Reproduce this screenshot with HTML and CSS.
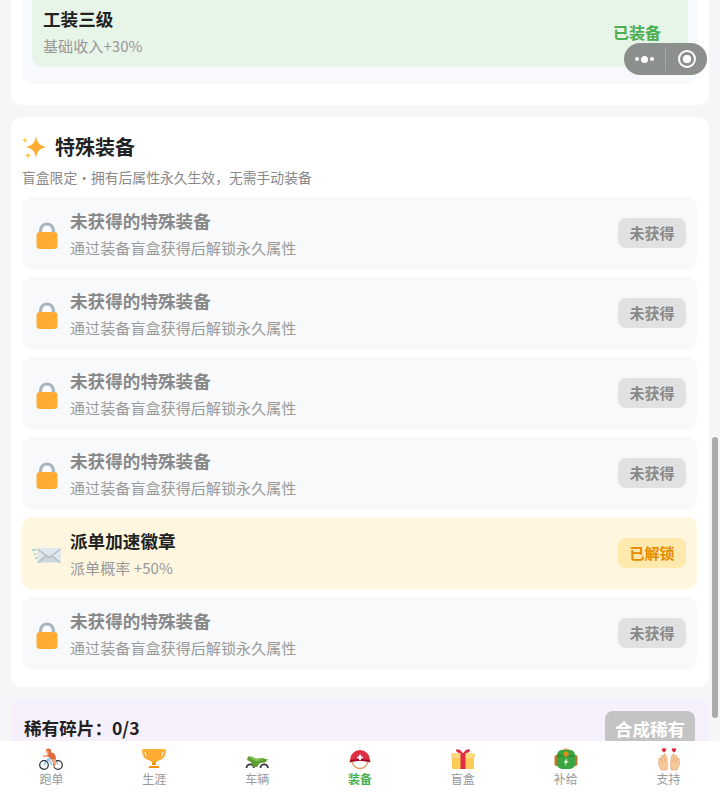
FILE: index.html
```html
<!DOCTYPE html>
<html lang="zh-CN">
<head>
  <meta charset="UTF-8">
  <meta name="viewport" content="width=device-width, initial-scale=1.0">
  <title>装备</title>
  <link rel="stylesheet" href="styles.css">
</head>
<body>

  <div class="page">
    <div class="scroll">

      <div class="card card-top">
        <div class="panel">
          <div class="outfit">
            <div>
              <p class="item-title">工装三级</p>
              <p class="item-sub">基础收入+30%</p>
            </div>
            <span class="outfit-state">已装备</span>
          </div>
        </div>
      </div>

      <div class="card card-special">
        <div class="section-head">
          <svg class="section-icon" viewBox="0 0 25 26">
            <path fill="#ffac33" d="M14 2c1 6.400 3.400 9.200 10 11-6.600 1.800-9 4.600-10 11.500C13 17.600 10.600 14.800 4 13c6.600-1.800 9-4.600 10-11z"/>
            <path fill="#ffcc4d" d="M3 3c.4 2.100 1 2.800 3 3.300C4 6.800 3.400 7.500 3 9.600 2.600 7.500 2 6.800 0 6.300 2 5.800 2.600 5.100 3 3z"/>
            <path fill="#ffcc4d" d="M6 18c.4 2.200 1.100 3 3.300 3.500C7.100 22 6.400 22.800 6 25c-.4-2.200-1.100-3-3.300-3.500C4.900 21 5.600 20.200 6 18z"/>
          </svg>
          <h2 class="section-title">特殊装备</h2>
        </div>
        <p class="section-sub">盲盒限定・拥有后属性永久生效，无需手动装备</p>

        <div class="item-list">
          <div class="item">
            <svg class="lock" viewBox="0 0 24 30"><path fill="none" stroke="#a9b6bf" stroke-width="3.200" d="M5.500 14v-3.500a6.500 6.500 0 0 1 13 0V14"/><rect x="1.500" y="12" width="21" height="17" rx="3.500" fill="#ffac33"/></svg>
            <div class="item-text">
              <p class="item-title muted">未获得的特殊装备</p>
              <p class="item-sub">通过装备盲盒获得后解锁永久属性</p>
            </div>
            <span class="badge">未获得</span>
          </div>
          <div class="item">
            <svg class="lock" viewBox="0 0 24 30"><path fill="none" stroke="#a9b6bf" stroke-width="3.200" d="M5.500 14v-3.500a6.500 6.500 0 0 1 13 0V14"/><rect x="1.500" y="12" width="21" height="17" rx="3.500" fill="#ffac33"/></svg>
            <div class="item-text">
              <p class="item-title muted">未获得的特殊装备</p>
              <p class="item-sub">通过装备盲盒获得后解锁永久属性</p>
            </div>
            <span class="badge">未获得</span>
          </div>
          <div class="item">
            <svg class="lock" viewBox="0 0 24 30"><path fill="none" stroke="#a9b6bf" stroke-width="3.200" d="M5.500 14v-3.500a6.500 6.500 0 0 1 13 0V14"/><rect x="1.500" y="12" width="21" height="17" rx="3.500" fill="#ffac33"/></svg>
            <div class="item-text">
              <p class="item-title muted">未获得的特殊装备</p>
              <p class="item-sub">通过装备盲盒获得后解锁永久属性</p>
            </div>
            <span class="badge">未获得</span>
          </div>
          <div class="item">
            <svg class="lock" viewBox="0 0 24 30"><path fill="none" stroke="#a9b6bf" stroke-width="3.200" d="M5.500 14v-3.500a6.500 6.500 0 0 1 13 0V14"/><rect x="1.500" y="12" width="21" height="17" rx="3.500" fill="#ffac33"/></svg>
            <div class="item-text">
              <p class="item-title muted">未获得的特殊装备</p>
              <p class="item-sub">通过装备盲盒获得后解锁永久属性</p>
            </div>
            <span class="badge">未获得</span>
          </div>
          <div class="item item-unlocked">
            <svg class="mail" viewBox="0 0 30 20">
              <path fill="#e1e8ed" d="M7 3h20a2 2 0 0 1 2 2v11a2 2 0 0 1-2 2H7a2 2 0 0 1-2-2V5a2 2 0 0 1 2-2z"/>
              <path fill="#ccd6dd" d="M5.500 17l9-8 2.500 2 2.500-2 9 8z"/>
              <path fill="#aab8c2" d="M5.500 17.500l8.500-8 .8.700-8.500 8zM28.500 17.500l-8.500-8-.8.700 8.500 8zM5.500 3.500L17 12l11.500-8.500.5 1L17 13.500 5 4.500z"/>
              <path fill="none" stroke="#8ccfd8" stroke-width="1.300" d="M0 5h4M2 9h2M3 13h2"/>
            </svg>
            <div class="item-text">
              <p class="item-title">派单加速徽章</p>
              <p class="item-sub">派单概率 +50%</p>
            </div>
            <span class="badge badge-unlocked">已解锁</span>
          </div>
          <div class="item">
            <svg class="lock" viewBox="0 0 24 30"><path fill="none" stroke="#a9b6bf" stroke-width="3.200" d="M5.500 14v-3.500a6.500 6.500 0 0 1 13 0V14"/><rect x="1.500" y="12" width="21" height="17" rx="3.500" fill="#ffac33"/></svg>
            <div class="item-text">
              <p class="item-title muted">未获得的特殊装备</p>
              <p class="item-sub">通过装备盲盒获得后解锁永久属性</p>
            </div>
            <span class="badge">未获得</span>
          </div>
        </div>
      </div>

      <div class="card card-shards">
        <span class="shards-label">稀有碎片：0/3</span>
        <button class="merge-btn">合成稀有</button>
      </div>

    </div>

    <div class="tabbar">
      <div class="tab">
        <svg class="tab-icon" viewBox="0 0 24 23">
          <path fill="none" stroke="#88c9f9" stroke-width="1.400" d="M5 17l4-6h7l3 6M9 11l4 6"/>
          <circle cx="5" cy="17" r="4.300" fill="none" stroke="#292f33" stroke-width="1.200"/>
          <circle cx="19" cy="17" r="4.300" fill="none" stroke="#292f33" stroke-width="1.200"/>
          <path fill="#dd6b3d" d="M8 8c0-2 2.500-3.500 4.500-3.500 2.500 0 4.500 3 4.500 6l-1 1.500h-3l-2-2z"/>
          <path fill="#f4a77a" d="M13 11l3.500.5 1 3-2 5h-1.500l1-4.500-3-1.500zM3.500 7.500L8 7l1 1.500-4.500 1z"/>
          <circle cx="9.500" cy="3" r="2.600" fill="#e85e2f"/>
          <circle cx="8.500" cy="3.800" r="1.400" fill="#f7b98f"/>
        </svg>
        <span>跑单</span>
      </div>
      <div class="tab">
        <svg class="tab-icon" viewBox="0 0 24 23">
          <path fill="none" stroke="#ffac33" stroke-width="2.400" d="M4 2.500H1.300c0 5 2.200 8 6.200 8.500M20 2.500h2.700c0 5-2.200 8-6.200 8.500"/>
          <path fill="#ffac33" d="M3.500 1h17c0 8-3.500 12-6.500 13v3h-4v-3C7 13 3.500 9 3.500 1z"/>
          <path fill="#f4900c" d="M10 14.500h4V17h-4zM7.500 18h9l1 2h-11z"/>
        </svg>
        <span>生涯</span>
      </div>
      <div class="tab">
        <svg class="tab-icon" viewBox="0 0 24 23">
          <path fill="none" stroke="#31373d" stroke-width="1.800" d="M1.500 20a3.700 3.700 0 0 1 7.400 0M15.500 20a3.700 3.700 0 0 1 7.400 0"/>
          <path fill="#5c9e31" d="M3 8.500l5 1.500 3 1.500 6-1.500 6 1.500-3 3-5 .5-3 4H8l-2-5-4-2z"/>
          <path fill="#7cc04b" d="M6 8l5 2.500 5-.5 1 2-6 1.500-4.500-2.500zM3 8l3 .5-1 1.500z"/>
        </svg>
        <span>车辆</span>
      </div>
      <div class="tab tab-active">
        <svg class="tab-icon" viewBox="0 0 24 23">
          <path fill="none" stroke="#d9a066" stroke-width="1.400" d="M4 13c1 5 4 7.500 8 7.500s7-2.500 8-7.500"/>
          <path fill="#dd2e44" d="M2 12a10 10 0 0 1 20 0v1c-6-2-14-2-20 0z"/>
          <path fill="#a0041e" d="M2 12.500c6-2 14-2 20 0l.5 2c-6-2-15-2-21 0z"/>
          <path fill="#fff" d="M11 6.800h2v1.700h1.700v2H13v1.700h-2v-1.700H9.300v-2H11z"/>
        </svg>
        <span>装备</span>
      </div>
      <div class="tab">
        <svg class="tab-icon" viewBox="0 0 24 23">
          <rect x="1" y="6" width="22" height="15" rx="1.500" fill="#fdcb58"/>
          <rect x="0" y="5" width="24" height="5" rx="1.500" fill="#ffd983"/>
          <rect x="9.500" y="5" width="5" height="16" fill="#dd2e44"/>
          <path fill="#dd2e44" d="M12 5.500C10 2 7 .5 5.500 1.500 4 2.500 6 5.500 12 5.500zM12 5.500c2-3.500 5-5 6.500-4 1.500 1-.5 4-6.500 4z"/>
        </svg>
        <span>盲盒</span>
      </div>
      <div class="tab">
        <svg class="tab-icon" viewBox="0 0 24 23">
          <path fill="none" stroke="#d99e5b" stroke-width="1.600" d="M8 5c0-5 8-5 8 0"/>
          <rect x="0.500" y="7" width="4.500" height="11" rx="2" fill="#b57a2c"/>
          <rect x="19" y="7" width="4.500" height="11" rx="2" fill="#b57a2c"/>
          <rect x="3" y="2" width="18" height="19" rx="5" fill="#3ba63f"/>
          <path fill="#2d8a33" d="M3 7h18v1.500H3z"/>
          <circle cx="12" cy="6" r="2.600" fill="#e08a1e"/>
          <path fill="#e8f7d8" d="M13 10l-3.500 4.500h2L10.800 18l3.700-5h-2z"/>
        </svg>
        <span>补给</span>
      </div>
      <div class="tab">
        <svg class="tab-icon" viewBox="0 0 24 23">
          <path fill="#f7c89b" stroke="#dfa06e" stroke-width=".6" d="M1.500 16l.5-6 2 .5.500-3 2 .5.800-2.500L9 7l1 4.500.5 5-.5 5.500H4z"/>
          <path fill="#f7c89b" stroke="#dfa06e" stroke-width=".6" d="M22.500 16l-.5-6-2 .5-.5-3-2 .5-.8-2.500L15 7l-1 4.500-.5 5 .5 5.500h6z"/>
          <path fill="none" stroke="#dfa06e" stroke-width=".6" d="M4 10.500l2 5M6.500 8l2 6M20 10.500l-2 5M17.500 8l-2 6"/>
          <path fill="#dd2e44" d="M7 .5c.9-.7 2.200-.2 2.200.9 0 1.300-1.300 2.300-2.200 3.100-.9-.8-2.200-1.800-2.200-3.100 0-1.100 1.300-1.600 2.200-.9zM17 .5c.9-.7 2.200-.2 2.200.9 0 1.300-1.300 2.300-2.200 3.100-.9-.8-2.200-1.800-2.200-3.100 0-1.100 1.300-1.600 2.200-.9z"/>
        </svg>
        <span>支持</span>
      </div>
    </div>

    <!-- mini program capsule -->
    <div class="capsule">
      <div class="capsule-more"><i></i><b></b><i></i></div>
      <div class="capsule-close"><span></span></div>
    </div>

    <div class="scrollbar"></div>
  </div>

</body>
</html>
```

FILE: styles.css
```css
* {
  box-sizing: border-box;
}

body {
  margin: 0;
  font-family: "Noto Sans CJK SC", "Noto Sans", sans-serif;
  background-color: #f5f6f8;
  color: #222;
}

p, h2 {
  margin: 0;
}

.page {
  position: relative;
  width: 720px;
  height: 794px;
  overflow: hidden;
  display: flex;
  flex-direction: column;
}

.scroll {
  height: 741px;
  overflow: hidden;
  padding: 0 11px;
  flex: none;
}

.card {
  background-color: #fff;
  border-radius: 10px;
}

.card-top {
  height: 105px;
  border-radius: 0 0 10px 10px;
  padding: 0 11px;
}

.panel {
  height: 84px;
  background-color: #f8f9fc;
  border-radius: 0 0 10px 10px;
  padding: 0 10px;
}

.outfit {
  height: 67px;
  background-color: #e7f4e8;
  border-radius: 0 0 10px 10px;
  padding: 6px 27px 0 11px;
  display: flex;
  justify-content: space-between;
  align-items: flex-start;
}

.outfit-state {
  margin-top: 14px;
  font-size: 16px;
  line-height: 24px;
  font-weight: 700;
  color: #4caf50;
}

.card-special {
  height: 570px;
  margin-top: 12px;
  padding: 15px 12px 0 11px;
}

.section-head {
  display: flex;
  align-items: center;
  gap: 8px;
  height: 30px;
}

.section-icon {
  width: 25px;
  height: 26px;
  flex: none;
}

.section-title {
  font-size: 20px;
  line-height: 30px;
  font-weight: 700;
  color: #222;
}

.section-sub {
  margin-top: 5px;
  font-size: 13.800px;
  line-height: 20px;
  color: #888;
}

.item-list {
  margin-top: 10px;
  display: flex;
  flex-direction: column;
  gap: 8px;
}

.item {
  height: 72px;
  background-color: #f8f9fb;
  border-radius: 10px;
  padding: 0 11px 0 13px;
  display: flex;
  align-items: center;
}

.item-unlocked {
  background-color: #fff6df;
}

.lock {
  width: 24px;
  height: 30px;
  margin-top: 4px;
  flex: none;
}

.mail {
  width: 30px;
  height: 20px;
  margin-left: -3px;
  margin-top: 3px;
  margin-right: -3px;
  flex: none;
}

.item-text {
  flex: 1;
  margin-left: 11px;
}

.item-title {
  font-size: 17.600px;
  line-height: 25px;
  font-weight: 700;
  color: #222;
}

.item-title.muted {
  color: #888;
}

.item-sub {
  margin-top: 3px;
  font-size: 15.100px;
  line-height: 22px;
  color: #999;
}

.badge {
  width: 68px;
  height: 30px;
  background-color: #e0e1e3;
  border-radius: 8px;
  text-align: center;
  font-size: 15px;
  line-height: 30px;
  font-weight: 700;
  color: #888;
}

.badge-unlocked {
  background-color: #ffe9ac;
  color: #e68a00;
}

.card-shards {
  height: 60px;
  margin-top: 12px;
  background-color: #f6effc;
  padding: 12px 14px 0 13px;
  display: flex;
  justify-content: space-between;
  align-items: flex-start;
}

.shards-label {
  margin-top: 3px;
  font-size: 17.600px;
  line-height: 28px;
  font-weight: 700;
  color: #222;
}

.merge-btn {
  width: 90px;
  height: 36px;
  border: none;
  border-radius: 8px;
  background-color: #c4c4c4;
  color: #fff;
  font-family: inherit;
  font-size: 17.600px;
  line-height: 36px;
  font-weight: 700;
  padding: 0;
}

.tabbar {
  height: 53px;
  background-color: #fff;
  display: flex;
  padding: 7px 0 0;
}

.tab {
  flex: 1;
  display: flex;
  flex-direction: column;
  align-items: center;
  font-size: 12px;
  line-height: 16px;
  color: #999;
}

.tab-active {
  color: #4caf50;
  font-weight: 700;
}

.tab-icon {
  width: 24px;
  height: 23px;
}

.capsule {
  position: absolute;
  top: 43px;
  left: 624px;
  width: 83px;
  height: 32px;
  border-radius: 16px;
  background-color: #8c908c;
  display: flex;
  align-items: center;
}

.capsule-more {
  width: 42px;
  display: flex;
  justify-content: center;
  align-items: center;
  gap: 2px;
  border-right: 1px solid #a5a8a5;
  height: 24px;
}

.capsule-more i {
  width: 4px;
  height: 4px;
  border-radius: 50%;
  background-color: #fff;
}

.capsule-more b {
  width: 7px;
  height: 7px;
  border-radius: 50%;
  background-color: #fff;
}

.capsule-close {
  flex: 1;
  display: flex;
  justify-content: center;
}

.capsule-close span {
  width: 18px;
  height: 18px;
  border-radius: 50%;
  border: 2px solid #fff;
  background: radial-gradient(circle, #fff 0 4px, transparent 4.500px);
}

.scrollbar {
  position: absolute;
  top: 437px;
  left: 712px;
  width: 6px;
  height: 281px;
  border-radius: 3px;
  background-color: #ababab;
}
```
